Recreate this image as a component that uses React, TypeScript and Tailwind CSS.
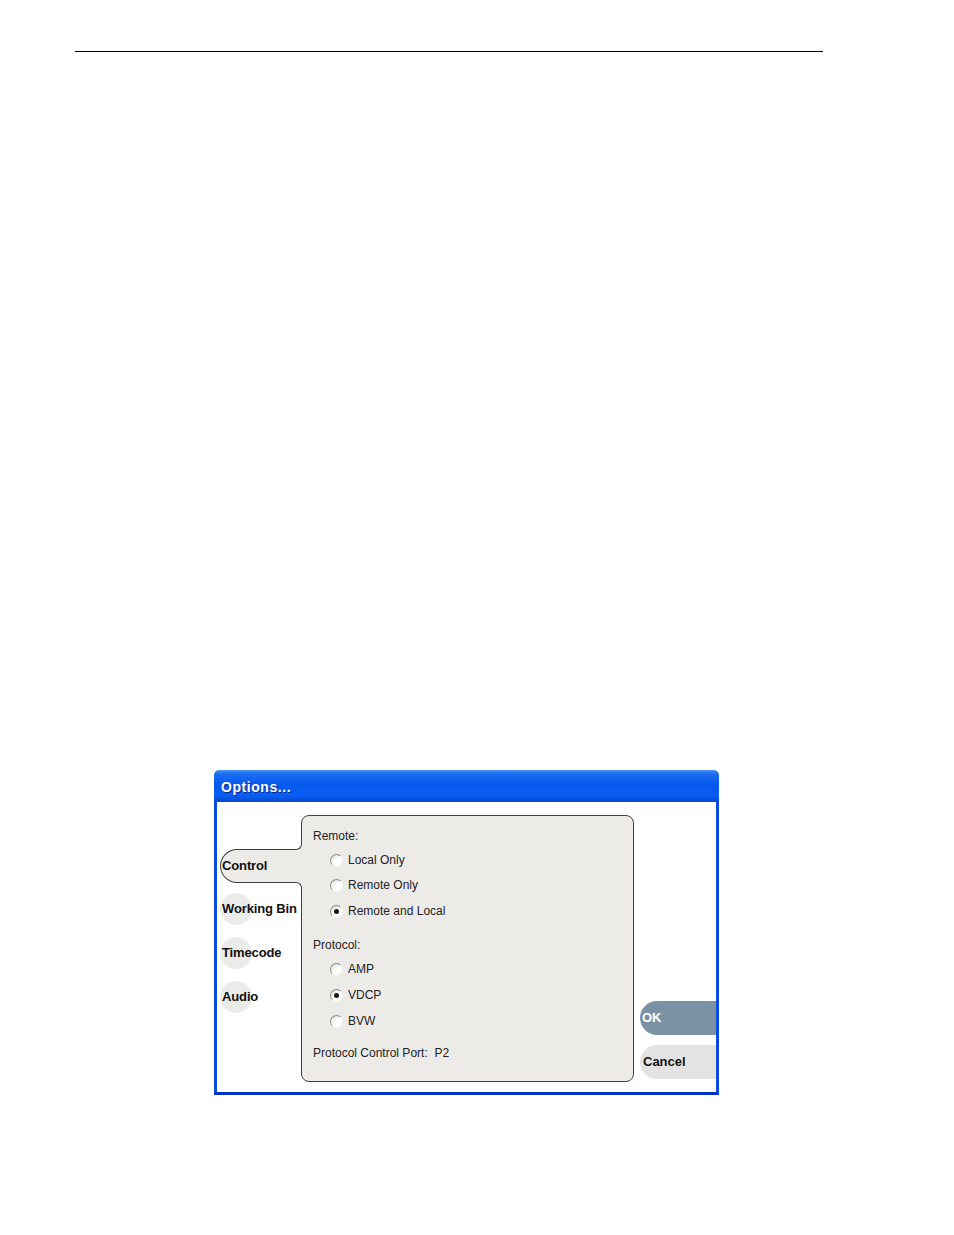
import React from 'react';

function Radio({ label, checked = false }: { label: string; checked?: boolean }) {
  return (
    <div className="flex items-center h-4 pl-[17px]">
      <span className="w-[13px] h-[13px] rounded-full border border-[#8c8c8c] border-b-[#f4f4f4] border-r-[#f4f4f4] bg-gradient-to-br from-[#d9d9d4] via-white to-white flex items-center justify-center">
        {checked && <span className="w-[5px] h-[5px] rounded-full bg-[#151515]" />}
      </span>
      <span className="ml-[5px] text-[12px] text-[#222]">{label}</span>
    </div>
  );
}

function RoundTab({ label, className = '' }: { label: string; className?: string }) {
  return (
    <div className={`w-8 h-8 rounded-full bg-[#ebebea] flex items-center ${className}`}>
      <span className="ml-[2px] whitespace-nowrap text-[13px] font-bold tracking-[-0.01em] text-[#111]">{label}</span>
    </div>
  );
}

export default function App() {
  return (
    <div className="w-[954px] h-[1235px] bg-white font-['Liberation_Sans',Arial,sans-serif]">
      <div className="pt-[51px] pl-[75px]">
        <div className="w-[748px] h-px bg-black" />
      </div>

      <div className="mt-[718px] ml-[214px] w-[505px]">
        {/* title bar */}
        <div className="h-8 rounded-t-[5px] bg-[linear-gradient(to_bottom,#4a95f8_0%,#1d6df2_12%,#0459ec_45%,#0a5ef3_80%,#0447d2_100%)] flex items-center pl-[7px] pt-[3px]">
          <span className="text-[14px] font-bold text-white tracking-[0.04em] [text-shadow:1px_1px_0_#0b2a8a]">Options...</span>
        </div>

        {/* client */}
        <div className="h-[293px] bg-white border-x-[3px] border-b-[3px] border-[#0a4be0] border-b-[#0333c2] flex pt-[13px] pb-[10px]">
          {/* tabs */}
          <div className="w-[84px] pl-[3px] pt-[34px] relative z-10 flex flex-col">
            <div className="relative h-[34px] w-[82px] rounded-l-[17px] border border-r-0 border-[#3f3f3f] bg-[#edebe8] flex items-center pl-px">
              <span className="text-[13px] font-bold tracking-[-0.01em] text-[#111]">Control</span>
              <div className="absolute right-0 top-[-7px] w-[7px] h-[7px] bg-[#edebe8]">
                <div className="w-full h-full bg-white border-r border-b border-[#3f3f3f] rounded-br-[6px]" />
              </div>
              <div className="absolute right-0 bottom-[-7px] w-[7px] h-[7px] bg-[#edebe8]">
                <div className="w-full h-full bg-white border-r border-t border-[#3f3f3f] rounded-tr-[6px]" />
              </div>
            </div>
            <RoundTab label="Working Bin" className="mt-[10px]" />
            <RoundTab label="Timecode" className="mt-3" />
            <RoundTab label="Audio" className="mt-3" />
          </div>

          {/* panel */}
          <div className="w-[333px] h-[267px] rounded-[8px] border border-[#3f3f3f] bg-[#edebe8] pl-[11px] pt-[12px]">
            <div className="h-4 flex items-center text-[12px] text-[#222]">Remote:</div>
            <div className="mt-2"><Radio label="Local Only" /></div>
            <div className="mt-[9px]"><Radio label="Remote Only" /></div>
            <div className="mt-[10px]"><Radio label="Remote and Local" checked /></div>
            <div className="mt-[18px] h-4 flex items-center text-[12px] text-[#222]">Protocol:</div>
            <div className="mt-2"><Radio label="AMP" /></div>
            <div className="mt-[10px]"><Radio label="VDCP" checked /></div>
            <div className="mt-[10px]"><Radio label="BVW" /></div>
            <div className="mt-4 h-4 flex items-center text-[12px] text-[#222] whitespace-pre">Protocol Control Port:  P2</div>
          </div>

          {/* buttons */}
          <div className="flex-1 ml-[6px] flex flex-col justify-end gap-[10px] pb-[3px]">
            <div className="h-[34px] rounded-l-[17px] bg-[#7b92a5] flex items-center pl-[2px]">
              <span className="text-[13px] font-bold text-white">OK</span>
            </div>
            <div className="h-[34px] rounded-l-[17px] bg-[#e3e3e3] flex items-center pl-[3px]">
              <span className="text-[13px] font-bold text-[#111]">Cancel</span>
            </div>
          </div>
        </div>
      </div>
    </div>
  );
}
